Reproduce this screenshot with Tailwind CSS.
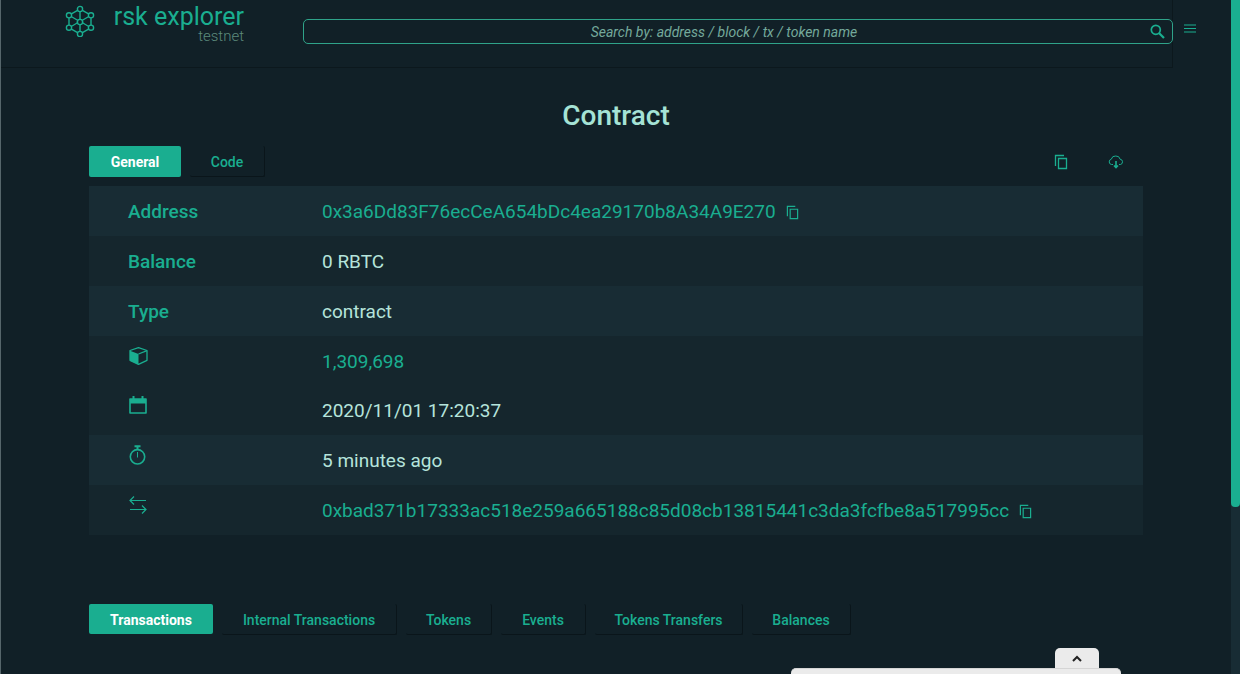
<!DOCTYPE html>
<html lang="en">
<head>
<meta charset="utf-8">
<meta name="viewport" content="width=device-width, initial-scale=1">
<title>rsk explorer - Contract</title>
<script src="https://cdn.jsdelivr.net/npm/@tailwindcss/browser@4"></script>
</head>
<body class="relative flex h-screen overflow-hidden border-l border-[#56666b] bg-[#112027] font-['Roboto',sans-serif] text-[#1aae90]">
<svg class="hidden">
  <symbol id="copy" viewBox="0 0 14 16"><path d="M1.5 12V1.5H10M4.5 4.5h8v10h-8z" fill="none" stroke="currentColor" stroke-width="1.3"/></symbol>
</svg>
<div class="min-w-0 flex-1">
  <header class="mr-[58px] flex h-[68px] items-start border-r border-b border-[#0c181d]">
    <a href="#" class="ml-[63px] flex items-start">
      <svg class="mt-[5px] h-[32px] w-[32px]" viewBox="0 0 32 32" fill="none" stroke="currentColor" stroke-width="1.4">
        <path d="M14 5.200 7 9.100M18 5.200l7 3.900M5 13v7M27 13v7M7 23.900l7 3.900M25 23.900l-7 3.900M16 6.500V14M16 19v7.500M7.200 11.500l6.800 4M24.800 11.500l-6.800 4M7.200 21.500l6.800-4M24.800 21.500l-6.800-4M16 14l-3 3.500M16 14l3 3.500"/>
        <g fill="#112027"><circle cx="16" cy="4" r="2.600"/><circle cx="5" cy="10.300" r="2.600"/><circle cx="27" cy="10.300" r="2.600"/><circle cx="5" cy="22.700" r="2.600"/><circle cx="27" cy="22.700" r="2.600"/><circle cx="16" cy="29" r="2.600"/><circle cx="16" cy="17" r="2.600"/></g>
      </svg>
      <span class="ml-[17px] flex w-[131px] flex-col items-end pt-[3px] whitespace-nowrap">
        <span class="text-[25px] leading-[28px]">rsk explorer</span>
        <span class="text-[15px] leading-[11px] font-light text-[#5c8a7c]">testnet</span>
      </span>
    </a>
    <form class="mt-[19px] -mr-px ml-[59px] flex h-[25px] flex-1 items-center rounded-[5px] border border-[#2fa389]" onsubmit="return false">
      <input type="search" aria-label="Search" placeholder="Search by: address / block / tx / token name" class="h-full min-w-0 flex-1 bg-transparent pl-2 text-center text-[14px] italic outline-none placeholder:text-[#74a99b]">
      <button aria-label="Submit search" class="mr-[7px] block">
        <svg class="h-[15px] w-[15px]" viewBox="0 0 15 15" fill="none" stroke="currentColor"><circle cx="5.800" cy="5.800" r="4.500" stroke-width="1.700"/><path d="m9 9 5 5" stroke-width="2.200"/></svg>
      </button>
    </form>
  </header>
  <button aria-label="Menu" class="absolute top-6 right-[44px]">
    <svg class="h-[9px] w-[12px]" viewBox="0 0 12 9" stroke="currentColor"><path d="M0 1h12M0 4.500h12M0 8h12"/></svg>
  </button>

  <main class="mx-[88px]">
    <h1 class="pt-[30px] text-center text-[28px] leading-[36px] font-medium text-[#a5e3d5]">Contract</h1>
    <div class="mt-3 flex h-[31px] items-center text-[14px] font-medium">
      <button class="h-full w-[92px] rounded-[2px] bg-[#1aae90] pt-[2px] font-bold text-white">General</button>
      <button class="ml-[9px] h-full w-[75px] rounded-[2px] border-r border-b border-[#0a151a] pt-[2px]">Code</button>
      <button aria-label="Copy data" class="ml-auto"><svg class="h-[16px] w-[14px]"><use href="#copy"/></svg></button>
      <button aria-label="Download" class="mr-[19px] ml-10">
        <svg class="h-[14px] w-[16px]" viewBox="0 0 16 14" fill="none" stroke="currentColor"><path d="M5 9.500H3.500a2.700 2.700 0 0 1-.2-5.300A4.200 4.200 0 0 1 7.800 1a4.200 4.200 0 0 1 4.300 3.200 2.700 2.700 0 0 1 .4 5.300H11"/><path d="M8 6v6M6 10.500l2 2 2-2" stroke-width="1.600"/></svg>
      </button>
    </div>

    <table class="mt-[9px] w-full table-fixed border-collapse text-left text-[19px] [&_td]:pt-[2px]">
      <colgroup><col class="w-[233px]"><col></colgroup>
      <tbody>
        <tr class="h-[50px] bg-[#182c34]"><th class="pt-[2px] pl-[39px] font-medium">Address</th><td><div class="flex items-center gap-[10px]"><a href="#">0x3a6Dd83F76ecCeA654bDc4ea29170b8A34A9E270</a><button aria-label="Copy address"><svg class="h-[15px] w-[13px]"><use href="#copy"/></svg></button></div></td></tr>
        <tr class="h-[50px] bg-[#15262d]"><th class="pt-[2px] pl-[39px] font-medium">Balance</th><td class="text-[#b5e4db]">0 RBTC</td></tr>
        <tr class="h-[50px] bg-[#182c34]"><th class="pt-[2px] pl-[39px] font-medium">Type</th><td class="text-[#b5e4db]">contract</td></tr>
        <tr class="h-[50px] bg-[#15262d]"><th class="pb-[10px] pl-[40px]">
          <svg role="img" aria-label="Block" class="h-[18px] w-[19px]" viewBox="0 0 19 18"><path d="M9.500.700 18 3.500v9.800L9.500 17.300 1 13.300V3.500z" fill="none" stroke="currentColor" stroke-width="1.300" stroke-linejoin="round"/><path d="M1 3.700 9.500 7v10.500L1 13.500z" fill="currentColor"/><path d="M9.500 7 18 3.700" fill="none" stroke="currentColor" stroke-width="1.300"/></svg></th><td><a href="#">1,309,698</a></td></tr>
        <tr class="h-[49px] bg-[#15262d]"><th class="pb-[11px] pl-[40px]">
          <svg role="img" aria-label="Date" class="h-[18px] w-[18px]" viewBox="0 0 18 18"><path d="M1 3h16v14H1z" fill="none" stroke="currentColor" stroke-width="1.600" stroke-linejoin="round"/><path d="M1 3h16v4.500H1z" fill="currentColor"/><path d="M4.500 0v4M13.500 0v4" stroke="currentColor" stroke-width="2"/></svg></th><td class="text-[#b5e4db]">2020/11/01 17:20:37</td></tr>
        <tr class="h-[50px] bg-[#182c34]"><th class="pb-[10px] pl-[40px]">
          <svg role="img" aria-label="Age" class="h-[20px] w-[17px]" viewBox="0 0 17 20" fill="none" stroke="currentColor"><circle cx="8.500" cy="11.800" r="7.200" stroke-width="1.600"/><path d="M5.500 1.200h6M8.500 1v4" stroke-width="2"/><path d="M8.500 7v5.500"/></svg></th><td class="text-[#b5e4db]">5 minutes ago</td></tr>
        <tr class="h-[50px] bg-[#15262d]"><th class="pb-[10px] pl-[40px]">
          <svg role="img" aria-label="Transaction" class="h-[18px] w-[18px]" viewBox="0 0 18 18" fill="none" stroke="currentColor" stroke-width="1.200"><path d="M17 4.500H1M5 .500l-4 4 4 4M1 13.500h16M13 9.500l4 4-4 4"/></svg></th><td><div class="flex items-center gap-[10px]"><a href="#">0xbad371b17333ac518e259a665188c85d08cb13815441c3da3fcfbe8a517995cc</a><button aria-label="Copy transaction"><svg class="h-[15px] w-[13px]"><use href="#copy"/></svg></button></div></td></tr>
      </tbody>
    </table>

    <nav class="mt-[69px] flex h-[31px] text-[14px] font-medium [&>button]:pt-[2px]">
      <button class="mr-[9px] h-[30px] w-[124px] rounded-[2px] bg-[#1aae90] font-bold text-white">Transactions</button>
      <button class="mr-[9px] w-[175px] rounded-[2px] border-r border-b border-[#0a151a]">Internal Transactions</button>
      <button class="mr-[9px] w-[86px] rounded-[2px] border-r border-b border-[#0a151a]">Tokens</button>
      <button class="mr-[9px] w-[85px] rounded-[2px] border-r border-b border-[#0a151a]">Events</button>
      <button class="mr-[9px] w-[148px] rounded-[2px] border-r border-b border-[#0a151a]">Tokens Transfers</button>
      <button class="w-[99px] rounded-[2px] border-r border-b border-[#0a151a]">Balances</button>
    </nav>
  </main>
</div>

<div class="w-[9px] bg-[#182c34]"><div class="h-[507px] rounded-b-[4px] bg-[#1aae90]"></div></div>

<!-- Collapsed drawer -->
<div class="absolute right-[119px] bottom-0 w-[330px]">
  <button aria-label="Expand" class="mr-[22px] ml-auto flex h-[20px] w-[44px] items-center justify-center rounded-t-[5px] bg-[#ebebeb] text-[#222]">
    <svg class="h-[7px] w-[10px]" viewBox="0 0 10 7" fill="none" stroke="currentColor" stroke-width="2"><path d="m1 6 4-4 4 4"/></svg>
  </button>
  <div class="h-[6px] rounded-t-[5px] border-t border-[#d5d5d5] bg-[#ebebeb]"></div>
</div>
</body>
</html>
